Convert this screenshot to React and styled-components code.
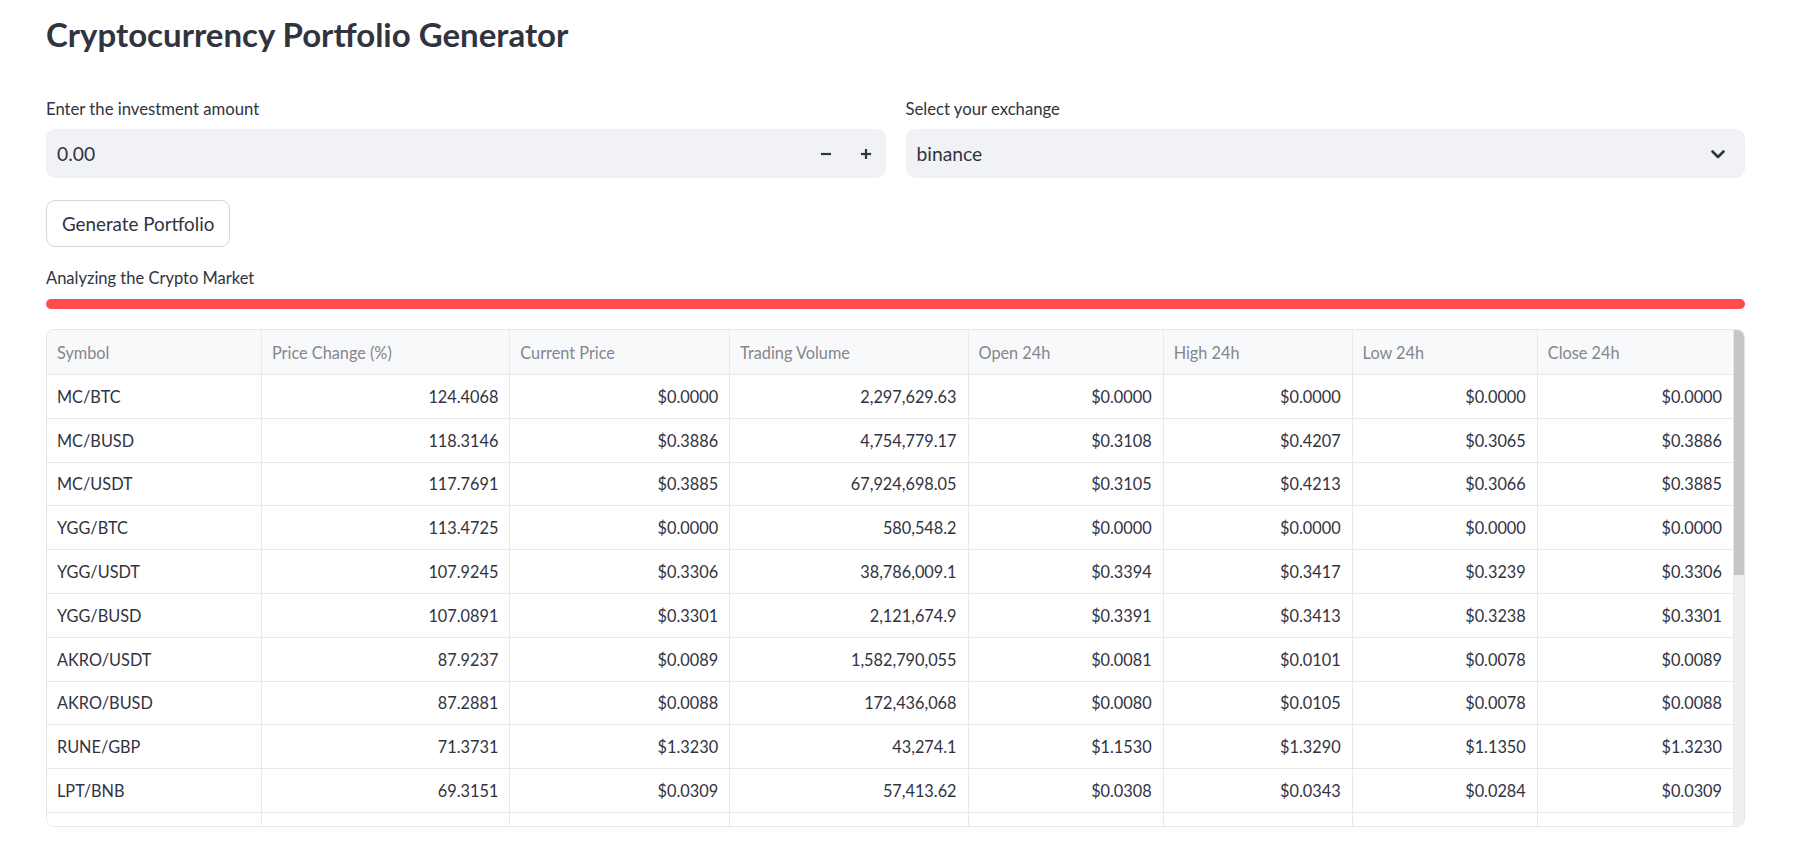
import React from "react";
import styled, { createGlobalStyle } from "styled-components";

const Global = createGlobalStyle`
  html, body { margin: 0; padding: 0; background: #ffffff; }
  body { font-family: Lato, "Liberation Sans", sans-serif; color: #31333f; }
  * { box-sizing: border-box; }
`;

const Page = styled.div`
  width: 1799px;
  padding: 14px 54px 0 46px;
  display: flex;
  flex-direction: column;
`;

const Title = styled.h1`
  margin: 0;
  font-size: 33px;
  line-height: 40px;
  font-weight: 700;
  color: #31333f;
`;

const InputsRow = styled.div`
  margin-top: 45px;
  display: grid;
  grid-template-columns: 1fr 1fr;
  column-gap: 20px;
`;

const Field = styled.div`
  display: flex;
  flex-direction: column;
  gap: 10px;
`;

const Label = styled.label`
  font-size: 16.7px;
  line-height: 20px;
  color: #31333f;
`;

const Box = styled.div`
  height: 49px;
  border-radius: 9px;
  background: #f0f2f6;
  display: flex;
  align-items: center;
  padding: 0 0 0 11px;
  font-size: 19.3px;
  color: #31333f;
`;

const BoxText = styled.span`
  flex: 1;
`;

const StepButton = styled.span`
  width: 40px;
  height: 100%;
  display: flex;
  align-items: center;
  justify-content: center;
  color: #31333f;
`;

const Chevron = styled.span`
  width: 54px;
  display: flex;
  align-items: center;
  justify-content: center;
  color: #31333f;
`;

const Button = styled.button`
  margin-top: 22px;
  align-self: flex-start;
  height: 47px;
  padding: 0 15px;
  border: 1px solid #d6d6d9;
  border-radius: 9px;
  background: #ffffff;
  font-family: inherit;
  font-size: 18.8px;
  color: #31333f;
`;

const Status = styled.div`
  margin-top: 21px;
  font-size: 16.5px;
  line-height: 20px;
  color: #31333f;
`;

const Progress = styled.div`
  margin-top: 11px;
  height: 10px;
  border-radius: 5px;
  background: #ff4b4b;
`;

const TableFrame = styled.div`
  margin-top: 20px;
  height: 498px;
  border: 1px solid #e6e7eb;
  border-radius: 8px;
  overflow: hidden;
  display: flex;
`;

const Grid = styled.div`
  flex: 1;
  overflow: hidden;
  display: flex;
  flex-direction: column;
`;

const cols = "215fr 248.5fr 219.8fr 238.5fr 195.2fr 189fr 185.2fr 196.3fr";

const Row = styled.div`
  display: grid;
  grid-template-columns: ${cols};
  flex: 0 0 auto;
  height: ${(p) => (p.$head ? "45px" : "43.8px")};
  background: ${(p) => (p.$head ? "#f8f9fb" : "#ffffff")};
`;

const Cell = styled.div`
  display: flex;
  align-items: center;
  justify-content: ${(p) => (p.$right ? "flex-end" : "flex-start")};
  padding: 0 11px 0 10px;
  border-right: 1px solid #e9e9ec;
  border-bottom: 1px solid #e9e9ec;
  font-size: 16.3px;
  white-space: nowrap;
  color: ${(p) => (p.$head ? "#85868d" : "#31333f")};
`;

const ScrollTrack = styled.div`
  width: 10px;
  flex: 0 0 10px;
  background: #efefef;
  display: flex;
  flex-direction: column;
`;

const ScrollThumb = styled.div`
  height: 245px;
  background: #c6c6c6;
`;

const headers = [
  "Symbol",
  "Price Change (%)",
  "Current Price",
  "Trading Volume",
  "Open 24h",
  "High 24h",
  "Low 24h",
  "Close 24h",
];

const rows = [
  ["MC/BTC", "124.4068", "$0.0000", "2,297,629.63", "$0.0000", "$0.0000", "$0.0000", "$0.0000"],
  ["MC/BUSD", "118.3146", "$0.3886", "4,754,779.17", "$0.3108", "$0.4207", "$0.3065", "$0.3886"],
  ["MC/USDT", "117.7691", "$0.3885", "67,924,698.05", "$0.3105", "$0.4213", "$0.3066", "$0.3885"],
  ["YGG/BTC", "113.4725", "$0.0000", "580,548.2", "$0.0000", "$0.0000", "$0.0000", "$0.0000"],
  ["YGG/USDT", "107.9245", "$0.3306", "38,786,009.1", "$0.3394", "$0.3417", "$0.3239", "$0.3306"],
  ["YGG/BUSD", "107.0891", "$0.3301", "2,121,674.9", "$0.3391", "$0.3413", "$0.3238", "$0.3301"],
  ["AKRO/USDT", "87.9237", "$0.0089", "1,582,790,055", "$0.0081", "$0.0101", "$0.0078", "$0.0089"],
  ["AKRO/BUSD", "87.2881", "$0.0088", "172,436,068", "$0.0080", "$0.0105", "$0.0078", "$0.0088"],
  ["RUNE/GBP", "71.3731", "$1.3230", "43,274.1", "$1.1530", "$1.3290", "$1.1350", "$1.3230"],
  ["LPT/BNB", "69.3151", "$0.0309", "57,413.62", "$0.0308", "$0.0343", "$0.0284", "$0.0309"],
  ["LPT/BTC", "68.9120", "$0.0005", "18,402.55", "$0.0004", "$0.0005", "$0.0004", "$0.0005"],
];

const MinusIcon = () => (
  <svg width="14" height="14" viewBox="0 0 14 14">
    <line x1="2" y1="7" x2="12" y2="7" stroke="currentColor" strokeWidth="2.2" />
  </svg>
);

const PlusIcon = () => (
  <svg width="14" height="14" viewBox="0 0 14 14">
    <line x1="2" y1="7" x2="12" y2="7" stroke="currentColor" strokeWidth="2.2" />
    <line x1="7" y1="2" x2="7" y2="12" stroke="currentColor" strokeWidth="2.2" />
  </svg>
);

const ChevronIcon = () => (
  <svg width="16" height="16" viewBox="0 0 16 16">
    <polyline
      points="2.5,5.5 8,11 13.5,5.5"
      fill="none"
      stroke="currentColor"
      strokeWidth="2.6"
      strokeLinecap="round"
      strokeLinejoin="round"
    />
  </svg>
);

export default function App() {
  return (
    <>
      <Global />
      <Page>
        <Title>Cryptocurrency Portfolio Generator</Title>
        <InputsRow>
          <Field>
            <Label>Enter the investment amount</Label>
            <Box>
              <BoxText>0.00</BoxText>
              <StepButton><MinusIcon /></StepButton>
              <StepButton><PlusIcon /></StepButton>
            </Box>
          </Field>
          <Field>
            <Label>Select your exchange</Label>
            <Box>
              <BoxText>binance</BoxText>
              <Chevron><ChevronIcon /></Chevron>
            </Box>
          </Field>
        </InputsRow>
        <Button>Generate Portfolio</Button>
        <Status>Analyzing the Crypto Market</Status>
        <Progress />
        <TableFrame>
          <Grid>
            <Row $head>
              {headers.map((h) => (
                <Cell key={h} $head>{h}</Cell>
              ))}
            </Row>
            {rows.map((r) => (
              <Row key={r[0]}>
                {r.map((v, i) => (
                  <Cell key={i} $right={i > 0}>{v}</Cell>
                ))}
              </Row>
            ))}
          </Grid>
          <ScrollTrack>
            <ScrollThumb />
          </ScrollTrack>
        </TableFrame>
      </Page>
    </>
  );
}
